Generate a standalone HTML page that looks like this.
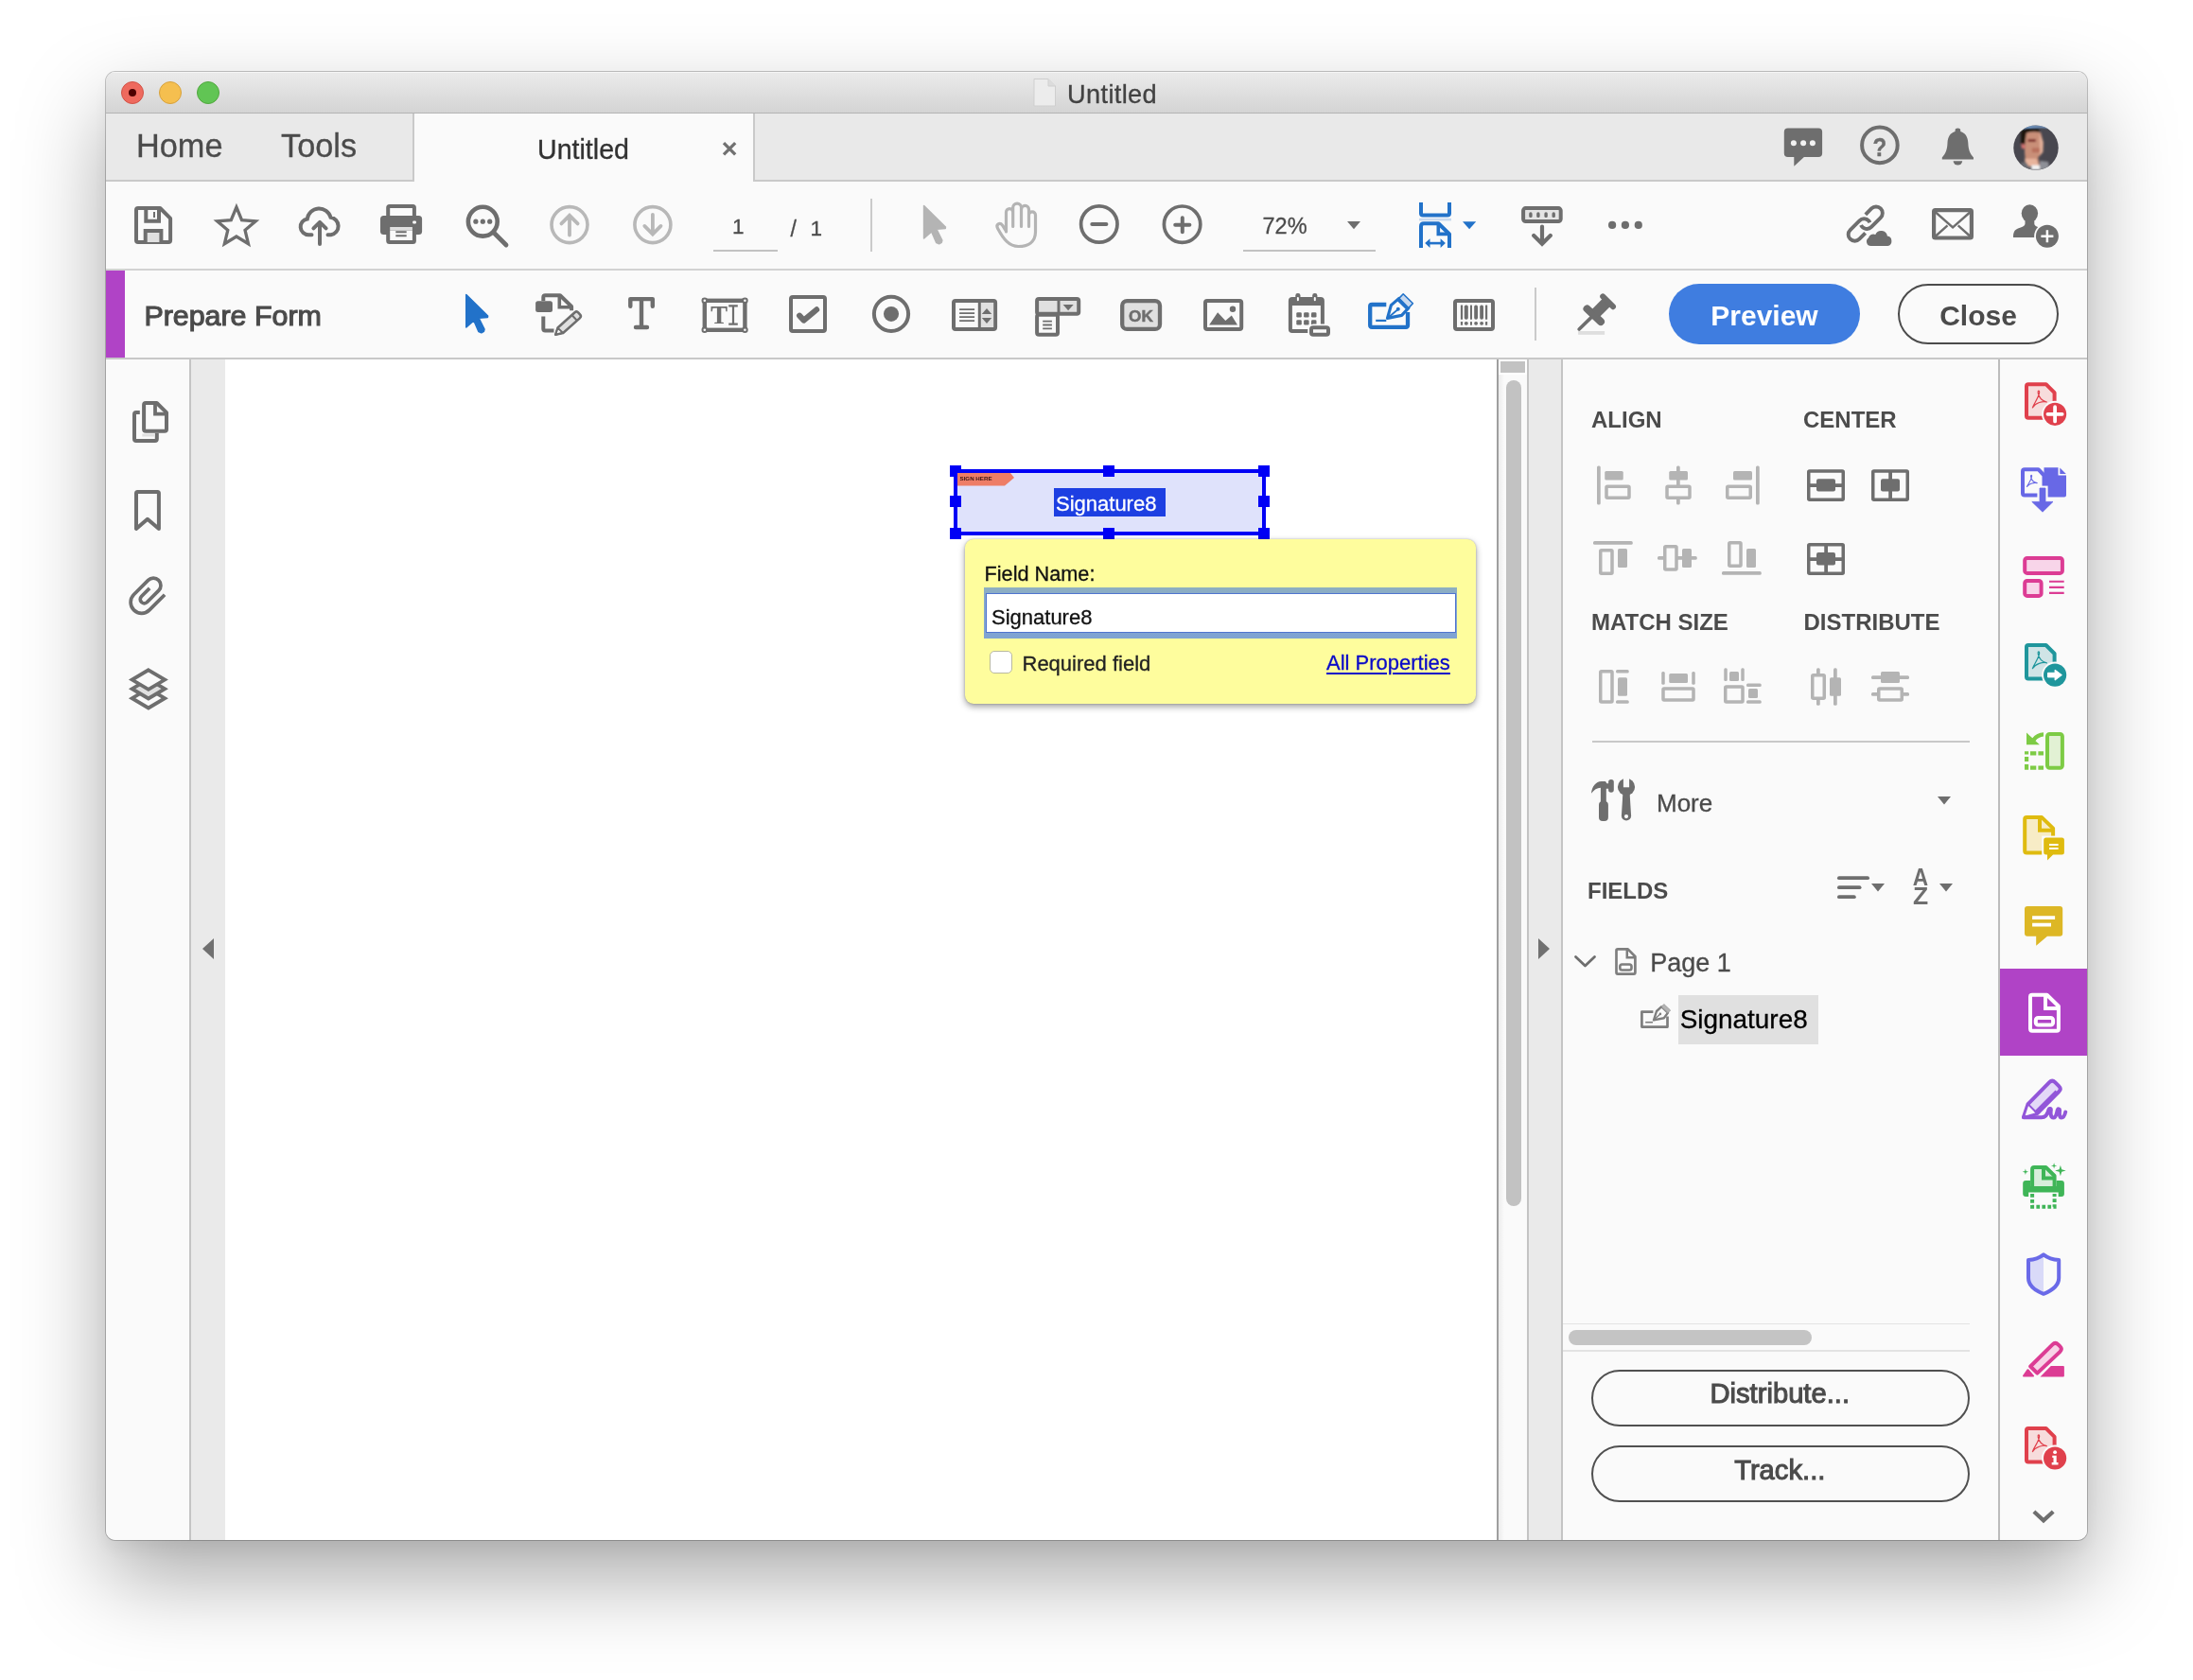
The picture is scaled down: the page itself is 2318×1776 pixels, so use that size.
<!DOCTYPE html>
<html lang="en">
<head>
<meta charset="utf-8">
<title>Untitled</title>
<style>
*{box-sizing:border-box;margin:0;padding:0}
html,body{width:2318px;height:1776px;overflow:hidden;background:#fff}
body{font-family:"Liberation Sans",sans-serif;color:#4b4b4b;position:relative}
.abs{position:absolute}
svg{position:absolute;overflow:visible}
#win{position:absolute;left:112px;top:76px;width:2094px;height:1552px;border-radius:10px;background:#fafafa;
 box-shadow:0 0 0 1px rgba(0,0,0,.22),0 40px 92px rgba(0,0,0,.34),0 10px 16px rgba(0,0,0,.04);}
#clip{position:absolute;left:0;top:0;width:2094px;height:1552px;border-radius:10px;overflow:hidden;will-change:transform}
#titlebar{left:0;top:0;width:2094px;height:44px;background:linear-gradient(#ebebeb,#d4d4d4);border-bottom:1px solid #b4b4b4;box-shadow:inset 0 1px 0 #f6f6f6}
.tl{position:absolute;top:10px;width:24px;height:24px;border-radius:50%}
#tabbar{left:0;top:44px;width:2094px;height:72px;background:#e9e9e9;border-bottom:2px solid #c9c9c9}
#tab{left:324px;top:44px;width:362px;height:72px;background:#fafafa;border-left:2px solid #c9c9c9;border-right:2px solid #c9c9c9}
#tb1{left:0;top:116px;width:2094px;height:94px;background:#fafafa;border-bottom:2px solid #d2d2d2}
#tb2{left:0;top:210px;width:2094px;height:94px;background:#fafafa;border-bottom:2px solid #c8c8c8}
.t{position:absolute;white-space:nowrap;line-height:1;-webkit-text-stroke:.3px}
.t[style*="font-weight:bold"]{-webkit-text-stroke:0}
</style>
</head>
<body>
<div id="win"><div id="clip">
<!-- coordinates inside #clip are window-relative: page x-112, page y-76 -->
<div id="titlebar" class="abs"></div>
<div class="tl" style="left:16px;background:#ee6a5e;border:1px solid #d15347"></div>
<div class="tl" style="left:56px;background:#f5bf4f;border:1px solid #d6a13d"></div>
<div class="tl" style="left:96px;background:#61c554;border:1px solid #51a73e"></div>
<div class="abs" style="left:24px;top:18px;width:8px;height:8px;border-radius:50%;background:#4d0000"></div>
<div class="t" style="left:1016px;top:9.6px;font-size:27.2px;letter-spacing:.36px;color:#424242">Untitled</div>

<div id="tabbar" class="abs"></div>
<div id="tab" class="abs"></div>
<div class="t" style="left:32px;top:61.4px;font-size:34.3px;color:#4b4b4b">Home</div>
<div class="t" style="left:185px;top:61.4px;font-size:34.3px;color:#4b4b4b">Tools</div>
<div class="t" style="left:456px;top:68.2px;font-size:28.6px;color:#323232">Untitled</div>

<div id="tb1" class="abs"></div>
<div id="tb2" class="abs"></div>
<div class="abs" style="left:0;top:210px;width:20px;height:92px;background:#b043c6"></div>
<div class="t" style="left:40.4px;top:242.47px;font-size:30.4px;color:#4b4b4b;-webkit-text-stroke:1.15px #4b4b4b">Prepare Form</div>


<!-- left sidebar -->
<div class="abs" style="left:0;top:304px;width:88px;height:1248px;background:#fafafa"></div>
<div class="abs" style="left:88px;top:304px;width:2px;height:1248px;background:#c4c4c4"></div>
<div class="abs" style="left:90px;top:304px;width:36px;height:1248px;background:#eaeaea"></div>
<svg style="left:101px;top:916px" width="14" height="22" viewBox="0 0 14 22"><path d="M13 0V22L1 11Z" fill="#707070"/></svg>
<!-- document -->
<div class="abs" style="left:126px;top:304px;width:1344px;height:1248px;background:#fff"></div>
<!-- scrollbar -->
<div class="abs" style="left:1470px;top:304px;width:34px;height:1248px;background:linear-gradient(90deg,#9f9f9f 0,#9f9f9f 1.5px,#ececec 2px,#fafafa 8px,#fafafa 32px,#c4c4c4 32px)"></div>
<div class="abs" style="left:1472px;top:304px;width:30px;height:16px;background:#fff"></div><div class="abs" style="left:1474px;top:306px;width:26px;height:12px;background:#c2c2c2"></div>
<div class="abs" style="left:1480px;top:326px;width:16px;height:873px;border-radius:8px;background:#c2c2c2"></div>
<div class="abs" style="left:1504px;top:304px;width:34px;height:1248px;background:#eaeaea"></div>
<div class="abs" style="left:1538px;top:304px;width:2px;height:1248px;background:#c4c4c4"></div>
<svg style="left:1514px;top:916px" width="14" height="22" viewBox="0 0 14 22"><path d="M0 0V22L12 11Z" fill="#707070"/></svg>
<!-- right panel -->
<div id="rp" class="abs" style="left:1540px;top:304px;width:461px;height:1248px;background:#fafafa"></div>
<div class="abs" style="left:2000.4px;top:304px;width:1.6px;height:1248px;background:#bcbcbc"></div>
<!-- right strip -->
<div class="abs" style="left:2002px;top:304px;width:92px;height:1248px;background:#fafafa"></div>
<div class="abs" style="left:2001.8px;top:947.8px;width:92.2px;height:91.8px;background:#b043c6"></div>
<div class="abs" style="left:896px;top:420px;width:330px;height:70px;border:4px solid #0000f5;background:#dfe2fb"></div>
<div class="abs" style="left:892px;top:416px;width:12px;height:12px;background:#0000f5"></div>
<div class="abs" style="left:892px;top:448px;width:12px;height:12px;background:#0000f5"></div>
<div class="abs" style="left:892px;top:482px;width:12px;height:12px;background:#0000f5"></div>
<div class="abs" style="left:1054px;top:416px;width:12px;height:12px;background:#0000f5"></div>
<div class="abs" style="left:1054px;top:482px;width:12px;height:12px;background:#0000f5"></div>
<div class="abs" style="left:1218px;top:416px;width:12px;height:12px;background:#0000f5"></div>
<div class="abs" style="left:1218px;top:448px;width:12px;height:12px;background:#0000f5"></div>
<div class="abs" style="left:1218px;top:482px;width:12px;height:12px;background:#0000f5"></div>
<svg style="left:900px;top:424px" width="62" height="14" viewBox="0 0 62 14"><path d="M0 0H56L60 5L50 13.6H0Z" fill="#ee7d66"/><text x="2.5" y="8" font-family="Liberation Sans,sans-serif" font-weight="bold" font-size="6.2" fill="#3a1410">SIGN HERE</text></svg>
<div class="t" style="left:1002px;top:440px;width:118px;height:30px;background:#1d3fe2;color:#fff;font-size:22px;padding:5.5px 0 0 2px">Signature8</div>
<div class="abs" style="left:908px;top:494px;width:540px;height:174px;border-radius:9px;background:#fefd9d;box-shadow:0 3px 7px rgba(0,0,0,.38),0 0 2px rgba(0,0,0,.25)"></div>
<div class="t" style="left:928.5px;top:520px;font-size:21.7px;color:#111;-webkit-text-stroke:.3px #111">Field Name:</div>
<div class="abs" style="left:928px;top:545px;width:500px;height:54px;background:linear-gradient(#8fb0bf,#86a8cc 20%,#7fa3d3)"></div>
<div class="abs" style="left:929.5px;top:551px;width:497px;height:42px;background:#fff;border:1.5px solid #4f74cf"></div>
<div class="t" style="left:936px;top:566px;font-size:22px;color:#111;-webkit-text-stroke:.3px #111">Signature8</div>
<div class="abs" style="left:934px;top:611.5px;width:24px;height:24px;border-radius:5px;background:#fff;border:1.5px solid #b9b9a0"></div>
<div class="t" style="left:968.5px;top:614.5px;font-size:22px;color:#222;-webkit-text-stroke:.3px #222">Required field</div>
<div class="t" style="left:1290px;top:614px;font-size:22px;color:#0a0ac8;text-decoration:underline;text-decoration-thickness:2.4px;-webkit-text-stroke:.3px #0a0ac8;text-underline-offset:3px">All Properties</div>

<!--PANEL-->
<div class="t" style="left:1570.00px;top:355.68px;font-size:24px;font-weight:bold;color:#4b4b4b;">ALIGN</div>
<div class="t" style="left:1794.00px;top:355.68px;font-size:24px;font-weight:bold;color:#4b4b4b;">CENTER</div>
<div class="t" style="left:1570.00px;top:570.18px;font-size:24px;font-weight:bold;color:#4b4b4b;">MATCH SIZE</div>
<div class="t" style="left:1794.50px;top:570.18px;font-size:24px;font-weight:bold;color:#4b4b4b;">DISTRIBUTE</div>
<div class="abs" style="left:1570.50px;top:706.50px;width:399.50px;height:2.00px;background:#c8c8c8"></div>
<div class="t" style="left:1639.00px;top:760.24px;font-size:26px;font-weight:normal;color:#4b4b4b;">More</div>
<div class="t" style="left:1566.00px;top:853.68px;font-size:24px;font-weight:bold;color:#4b4b4b;">FIELDS</div>
<div class="t" style="left:1632.25px;top:929.39px;font-size:27px;font-weight:normal;color:#4b4b4b;">Page 1</div>
<div class="abs" style="left:1662.00px;top:976.00px;width:148.00px;height:52.00px;background:#e0e0e0"></div>
<div class="t" style="left:1663.75px;top:988.13px;font-size:27.9px;font-weight:normal;color:#000;">Signature8</div>
<div class="abs" style="left:1540.00px;top:1322.50px;width:430.00px;height:1.50px;background:#e3e3e3"></div>
<div class="abs" style="left:1540.00px;top:1351.00px;width:430.00px;height:1.50px;background:#e3e3e3"></div>
<div class="abs" style="left:1546.00px;top:1330.00px;width:257.00px;height:16.00px;background:#c4c4c4;border-radius:8px"></div>
<div class="abs" style="left:1569.50px;top:1372.00px;width:400.50px;height:59.50px;border:2px solid #505050;border-radius:30px"></div>
<div class="abs" style="left:1569.50px;top:1452.00px;width:400.50px;height:59.50px;border:2px solid #505050;border-radius:30px"></div>
<div class="t" style="left:1569.25px;width:400px;text-align:center;top:1383.28px;font-size:29.2px;font-weight:normal;color:#4b4b4b;-webkit-text-stroke:1.05px #4b4b4b">Distribute...</div>
<div class="t" style="left:1569.25px;width:400px;text-align:center;top:1463.58px;font-size:29.2px;font-weight:normal;color:#4b4b4b;-webkit-text-stroke:1.05px #4b4b4b">Track...</div>
<svg style="left:-112px;top:-76px" width="2318" height="1776" viewBox="0 0 2318 1776"><rect x="1688" y="492.5" width="3.75" height="41.00" fill="#b4b4b4" rx="1.5"/>
<rect x="1696.25" y="498" width="19.50" height="9.50" fill="#b4b4b4" rx="1.5"/>
<rect x="1698.0" y="514.25" width="24.00" height="12.00" fill="#fafafa" stroke="#b4b4b4" stroke-width="3.5" rx="1"/>
<rect x="1772" y="492.5" width="3.75" height="41.00" fill="#b4b4b4" rx="1.5"/>
<rect x="1764.25" y="498" width="19.75" height="9.50" fill="#b4b4b4" rx="1.5"/>
<rect x="1762.0" y="514.25" width="24.00" height="12.00" fill="#fafafa" stroke="#b4b4b4" stroke-width="3.5" rx="1"/>
<rect x="1856" y="492.5" width="3.75" height="41.00" fill="#b4b4b4" rx="1.5"/>
<rect x="1832" y="498" width="20.00" height="9.50" fill="#b4b4b4" rx="1.5"/>
<rect x="1825.75" y="514.25" width="24.50" height="12.00" fill="#fafafa" stroke="#b4b4b4" stroke-width="3.5" rx="1"/>
<rect x="1911.75" y="498.0" width="36.50" height="30.25" fill="none" stroke="#6e6e6e" stroke-width="3.5" rx="1"/>
<rect x="1912" y="511.25" width="36.00" height="3.75" fill="#6e6e6e" rx="0"/>
<rect x="1920" y="506.25" width="20.00" height="13.25" fill="#6e6e6e" rx="2"/>
<rect x="1979.75" y="498.0" width="36.50" height="30.25" fill="none" stroke="#6e6e6e" stroke-width="3.5" rx="1"/>
<rect x="1996.25" y="498" width="3.75" height="30.00" fill="#6e6e6e" rx="0"/>
<rect x="1988" y="506.25" width="20.00" height="13.25" fill="#6e6e6e" rx="2"/>
<rect x="1684" y="572" width="41.75" height="3.75" fill="#b4b4b4" rx="1.5"/>
<rect x="1691.75" y="581.75" width="12.25" height="24.50" fill="#fafafa" stroke="#b4b4b4" stroke-width="3.5" rx="1"/>
<rect x="1710" y="580" width="10.00" height="20.00" fill="#b4b4b4" rx="1.5"/>
<rect x="1752" y="588" width="41.75" height="3.75" fill="#b4b4b4" rx="1.5"/>
<rect x="1759.75" y="577.75" width="12.25" height="24.25" fill="#fafafa" stroke="#b4b4b4" stroke-width="3.5" rx="1"/>
<rect x="1778" y="580" width="10.00" height="20.00" fill="#b4b4b4" rx="1.5"/>
<rect x="1820" y="604" width="41.75" height="3.75" fill="#b4b4b4" rx="1.5"/>
<rect x="1827.75" y="573.75" width="12.25" height="24.50" fill="#fafafa" stroke="#b4b4b4" stroke-width="3.5" rx="1"/>
<rect x="1846" y="580" width="10.00" height="20.00" fill="#b4b4b4" rx="1.5"/>
<rect x="1911.75" y="575.75" width="36.50" height="30.50" fill="none" stroke="#6e6e6e" stroke-width="3.5" rx="1"/>
<rect x="1912" y="589.25" width="36.00" height="3.75" fill="#6e6e6e" rx="0"/>
<rect x="1928.25" y="576" width="3.75" height="30.00" fill="#6e6e6e" rx="0"/>
<rect x="1920" y="584" width="20.00" height="13.50" fill="#6e6e6e" rx="2"/>
<rect x="1691.75" y="709.75" width="12.25" height="32.25" fill="#fafafa" stroke="#b4b4b4" stroke-width="3.5" rx="1"/>
<rect x="1710" y="716.25" width="10.00" height="19.50" fill="#b4b4b4" rx="1.5"/>
<rect x="1708" y="708" width="13.75" height="3.50" fill="#b4b4b4" rx="1.5"/>
<rect x="1708" y="740.25" width="13.75" height="3.50" fill="#b4b4b4" rx="1.5"/>
<rect x="1764.25" y="712" width="19.75" height="10.00" fill="#b4b4b4" rx="1.5"/>
<rect x="1758.0" y="728.0" width="32.00" height="12.00" fill="#fafafa" stroke="#b4b4b4" stroke-width="3.5" rx="1"/>
<rect x="1756.25" y="710" width="3.50" height="13.75" fill="#b4b4b4" rx="1.5"/>
<rect x="1788.25" y="710" width="3.50" height="13.75" fill="#b4b4b4" rx="1.5"/>
<rect x="1822.25" y="706.25" width="3.50" height="13.75" fill="#b4b4b4" rx="1.5"/>
<rect x="1840.25" y="706.25" width="3.50" height="13.75" fill="#b4b4b4" rx="1.5"/>
<rect x="1828" y="710" width="10.00" height="10.00" fill="#b4b4b4" rx="1.5"/>
<rect x="1823.75" y="726.0" width="18.25" height="16.00" fill="#fafafa" stroke="#b4b4b4" stroke-width="3.5" rx="1"/>
<rect x="1846" y="722.5" width="15.75" height="3.50" fill="#b4b4b4" rx="1.5"/>
<rect x="1848" y="728" width="10.00" height="10.00" fill="#b4b4b4" rx="1.5"/>
<rect x="1846" y="740.25" width="15.75" height="3.50" fill="#b4b4b4" rx="1.5"/>
<rect x="1920" y="706.25" width="3.75" height="39.50" fill="#b4b4b4" rx="1.5"/>
<rect x="1938" y="706.25" width="3.75" height="39.50" fill="#b4b4b4" rx="1.5"/>
<rect x="1915.75" y="713.75" width="12.50" height="24.50" fill="#fafafa" stroke="#b4b4b4" stroke-width="3.5" rx="1"/>
<rect x="1934" y="716.25" width="12.00" height="19.50" fill="#b4b4b4" rx="1.5"/>
<rect x="1978" y="714.25" width="40.00" height="3.75" fill="#b4b4b4" rx="1.5"/>
<rect x="1978" y="732" width="40.00" height="3.75" fill="#b4b4b4" rx="1.5"/>
<rect x="1988" y="710" width="20.00" height="12.00" fill="#b4b4b4" rx="1.5"/>
<rect x="1985.75" y="728.0" width="24.50" height="12.00" fill="#fafafa" stroke="#b4b4b4" stroke-width="3.5" rx="1"/>
<path d="M2048 842H2062L2055 850.5Z" fill="#6e6e6e"/>
<rect x="1942" y="926.25" width="34.00" height="3.75" fill="#6e6e6e" rx="2"/>
<rect x="1942" y="936.25" width="25.50" height="3.75" fill="#6e6e6e" rx="2"/>
<rect x="1942" y="946.25" width="19.75" height="3.75" fill="#6e6e6e" rx="2"/>
<path d="M1978 934H1992L1985 942.5Z" fill="#6e6e6e"/>
<path d="M2050 934H2064L2057 942.5Z" fill="#6e6e6e"/>
<text transform="translate(2030 935.8) scale(.9 1)" text-anchor="middle" font-family="Liberation Sans,sans-serif" font-weight="bold" font-size="25.2" fill="#6e6e6e">A</text>
<text transform="translate(2030 956) scale(1.05 1)" text-anchor="middle" font-family="Liberation Sans,sans-serif" font-weight="bold" font-size="25.2" fill="#6e6e6e">Z</text>
<path d="M1665.5 1011.5L1675.5 1021L1685.5 1011.5" fill="none" stroke="#6e6e6e" stroke-width="2.8" stroke-linecap="round" stroke-linejoin="round"/>
<path d="M1682 838.8C1682.5 831.5 1687 826 1692.5 826L1696.5 826C1697.6 826 1697.8 828.2 1698.6 828.2L1701 828.2L1701 833.7L1697.8 833.7L1697.8 848L1691.9 848L1691.9 832.8C1688 832.8 1685 835 1682 838.8Z" fill="#6e6e6e"/>
<rect x="1700.1" y="824.1" width="5.70" height="13.70" fill="#6e6e6e" rx="2.8"/>
<rect x="1690" y="847" width="9.90" height="20.90" fill="#6e6e6e" rx="4"/>
<circle cx="1719" cy="831.9" r="9.1" fill="#6e6e6e"/>
<rect x="1715.9" y="821" width="6.20" height="11.30" fill="#fafafa" rx="0"/>
<path d="M1715.4 838L1722.6 838L1724.1 862.5A5.1 5.1 0 0 1 1713.9 862.5Z" fill="#6e6e6e"/><circle cx="1719" cy="863.1" r="2.1" fill="#fafafa"/>
<path d="M1710 1003.4H1720.7L1728.4 1011.2V1028.1Q1728.4 1029.6 1726.9 1029.6H1710Q1708.5 1029.6 1708.5 1028.1V1004.9Q1708.5 1003.4 1710 1003.4Z" fill="none" stroke="#7e7e7e" stroke-width="2.7" stroke-linejoin="round"/>
<path d="M1719.8 1003.6V1012.2H1728.2" fill="none" stroke="#7e7e7e" stroke-width="2.5"/>
<rect x="1712.3" y="1019.5" width="12.2" height="6" rx="2.2" fill="none" stroke="#7e7e7e" stroke-width="2.6"/>
<path d="M1747.4 1069.6H1735.4V1085.6H1762.5V1074.5" fill="none" stroke="#7e7e7e" stroke-width="2.7" stroke-linejoin="round"/>
<path d="M1739.2 1080.7H1747" stroke="#7e7e7e" stroke-width="1.6"/>
<path d="M1748 1078.4L1751 1069L1756.3 1064.2L1763 1070.6L1758.8 1076.2Z" fill="#fafafa" stroke="#7e7e7e" stroke-width="2.4" stroke-linejoin="round"/>
<path d="M1756.3 1064.2L1758.8 1061.6L1765.6 1068L1763 1070.6Z" fill="#b4b4b4" stroke="#a0a0a0" stroke-width="1"/>
<path d="M1748.2 1078.2L1754.6 1072.2" stroke="#7e7e7e" stroke-width="1.3"/><circle cx="1754.9" cy="1071.9" r="1.3" fill="#7e7e7e"/></svg>
<!--/PANEL-->
<!--LEFT-->
<svg style="left:-112px;top:-76px" width="2318" height="1776" viewBox="0 0 2318 1776"><path d="M147.8 436.1H144Q142 436.1 142 438.1V463.9Q142 465.9 144 465.9H163.8Q165.8 465.9 165.8 463.9V457.7" fill="none" stroke="#6e6e6e" stroke-width="4"/>
<rect x="150.3" y="458.5" width="13.4" height="3" fill="#e0e0e0"/>
<path d="M154.1 426H165.7L176 436.1V453.7Q176 455.7 174 455.7H154.1Q152.1 455.7 152.1 453.7V428Q152.1 426 154.1 426Z" fill="#fafafa" stroke="#6e6e6e" stroke-width="4" stroke-linejoin="round"/>
<path d="M164 426.3V437.7H176" fill="none" stroke="#6e6e6e" stroke-width="3.8"/>
<path d="M145.5 520H166.4Q167.9 520 167.9 521.5V559L155.9 548.8L144 559V521.5Q144 520 145.5 520Z" fill="none" stroke="#6e6e6e" stroke-width="4" stroke-linejoin="round"/>
<g transform="translate(155.5 629.2) rotate(-45)"><path d="M13.5 12.8L-9.4 12.8A11.6 11.6 0 0 1 -9.4 -10.4L12 -10.4A7.8 7.8 0 0 1 12 5.2L-5.2 5.2A4.25 4.25 0 0 1 -5.2 -3.3L7 -3.3" fill="none" stroke="#6e6e6e" stroke-width="3.7" stroke-linejoin="round"/></g>
<path d="M156.9 727.9000000000001L174.20000000000002 738.2L156.9 748.5L139.6 738.2Z" fill="#fafafa" stroke="#6e6e6e" stroke-width="3.8" stroke-linejoin="miter"/>
<path d="M156.9 717.9000000000001L174.20000000000002 728.2L156.9 738.5L139.6 728.2Z" fill="#e0e0e0" stroke="#6e6e6e" stroke-width="3.8" stroke-linejoin="miter"/>
<path d="M156.9 708.3000000000001L174.20000000000002 718.6L156.9 728.9L139.6 718.6Z" fill="#fafafa" stroke="#6e6e6e" stroke-width="3.8" stroke-linejoin="miter"/></svg>
<!--/LEFT-->
<!--STRIP-->
<svg style="left:-112px;top:-76px" width="2318" height="1776" viewBox="0 0 2318 1776"><path d="M2144 406.2H2162.6L2171.6 415.2V441.8H2144Q2142 441.8 2142 439.8V408.2Q2142 406.2 2144 406.2Z" fill="#f7dcdc" stroke="#e0404c" stroke-width="4" stroke-linejoin="round"/>
<path d="M2148.4 430.9C2149.9 426.4 2154.9 420.4 2155.6 414.9C2155.8 412.4 2153.8 412.4 2154.2000000000003 415.4C2154.9 420.4 2158.9 424.2 2163.4 425.0C2159.4 423.59999999999997 2151.4 425.9 2148.4 430.9Z" fill="none" stroke="#e0404c" stroke-width="1.2" stroke-linejoin="round"/>
<circle cx="2172.1" cy="437.8" r="14" fill="#fafafa"/><circle cx="2172.1" cy="437.8" r="12.1" fill="#e0404c"/>
<path d="M2164.5 437.8H2179.7M2172.1 430.2V445.40000000000003" stroke="#fff" stroke-width="3.8" stroke-linecap="round"/>
<path d="M2140 496.2H2154.5L2160.5 502.5V523.5H2140Q2138 523.5 2138 521.5V498.2Q2138 496.2 2140 496.2Z" fill="#fafafa" stroke="#6868e6" stroke-width="4" stroke-linejoin="round"/>
<path d="M2160.5 494.2H2175.5V502.6H2184V523.5Q2184 525.5 2182 525.5H2160.5Z" fill="#6868e6"/><path d="M2177.3 494.5L2183.8 500.9H2177.3Z" fill="#6868e6"/>
<path d="M2142.5 514.5C2144 511.5 2147 507.5 2147.6 503.5C2147.8 501.7 2146.4 501.7 2146.6 503.8C2147.2 507.5 2150 510 2153.2 510.6C2150 509.8 2145 511 2142.5 514.5Z" fill="none" stroke="#6868e6" stroke-width="1.1" stroke-linejoin="round"/>
<path d="M2153.4 513.6H2164.6V527.5H2153.4Z" fill="#fafafa"/>
<path d="M2156 516H2162V530.4H2170L2159 541.2L2147.8 530.4H2156Z" fill="#6868e6" stroke="#6868e6" stroke-width=".8" stroke-linejoin="round"/>
<rect x="2140.2" y="590" width="39.7" height="15.9" rx="2.5" fill="#f8d5e9" stroke="#dc3c94" stroke-width="4"/>
<rect x="2140.2" y="614" width="17.4" height="15.9" rx="2.5" fill="#f8d5e9" stroke="#dc3c94" stroke-width="4"/>
<path d="M2166 614.8H2181.7M2166 620.9H2181.7M2166 626.9H2181.7" stroke="#dc3c94" stroke-width="2.1"/>
<path d="M2144 682H2162.6L2171.6 691V717.6H2144Q2142 717.6 2142 715.6V684Q2142 682 2144 682Z" fill="#cfe4e6" stroke="#1f969c" stroke-width="4" stroke-linejoin="round"/>
<path d="M2148.4 706.7C2149.9 702.2 2154.9 696.2 2155.6 690.7C2155.8 688.2 2153.8 688.2 2154.2000000000003 691.2C2154.9 696.2 2158.9 700.0 2163.4 700.8000000000001C2159.4 699.4000000000001 2151.4 701.7 2148.4 706.7Z" fill="none" stroke="#1f969c" stroke-width="1.2" stroke-linejoin="round"/>
<circle cx="2172.1" cy="713.6" r="14" fill="#fafafa"/><circle cx="2172.1" cy="713.6" r="12.1" fill="#1f969c"/>
<path d="M2164.5 711.3000000000001H2172.1V708.1L2179.4 713.6L2172.1 719.1V715.9H2164.5Z" fill="#fff" stroke="#fff" stroke-width="1" stroke-linejoin="round"/>
<rect x="2164" y="776" width="15.9" height="35.8" rx="2.5" fill="#e2f1d4" stroke="#7dcb45" stroke-width="4"/>
<path d="M2140 794.2H2144.2V797H2140ZM2146 794.2H2152.3V798.4H2146ZM2154.4 794.2H2160V798.4H2154.4ZM2140 800H2144.2V805H2140ZM2140 808H2144.2V813.8H2140ZM2146 809.6H2152.3V813.8H2146ZM2154.4 809.6H2160V813.8H2154.4ZM2140 794.2H2144.2V797.5H2140Z" fill="#7dcb45"/>
<path d="M2142 774.6V787.3H2155.9L2151.5 783.2C2153.5 780.3 2156.5 778.6 2160 778.4V774.2C2155.3 774.4 2151 776.6 2148.3 780.3Z" fill="#7dcb45"/>
<path d="M2142.2 864.1H2158.2L2170.1 875.6V901.6H2142.2Q2140.2 901.6 2140.2 899.6V866.1Q2140.2 864.1 2142.2 864.1Z" fill="#f7ecc6" stroke="#dfbb0f" stroke-width="4" stroke-linejoin="round"/>
<path d="M2156 864.5V877.8H2170" fill="none" stroke="#dfbb0f" stroke-width="4"/>
<path d="M2158.2 883.6H2184V911H2158.2Z" fill="#fafafa"/>
<path d="M2162.7 885.6H2179.4Q2181.9 885.6 2181.9 888.1V901.1Q2181.9 903.6 2179.4 903.6H2170.1L2164 909.4V903.6H2162.7Q2160.2 903.6 2160.2 901.1V888.1Q2160.2 885.6 2162.7 885.6Z" fill="#dfbb0f"/>
<path d="M2166 893H2175.6M2166 897H2175.6" stroke="#fff" stroke-width="2"/>
<path d="M2143 958H2177.2Q2180.2 958 2180.2 961V986.8Q2180.2 989.8 2177.2 989.8H2164L2152.2 999.8V989.8H2143Q2140 989.8 2140 986.8V961Q2140 958 2143 958Z" fill="#ddb725"/>
<path d="M2148.1 970.1H2172.1M2148.1 977.7H2168" stroke="#fff" stroke-width="3.7"/>
<path d="M2148 1051.7H2163.6L2175.9 1063.8V1087.7Q2175.9 1089.7 2173.9 1089.7H2148Q2146 1089.7 2146 1087.7V1053.7Q2146 1051.7 2148 1051.7Z" fill="none" stroke="#fff" stroke-width="4" stroke-linejoin="round"/>
<path d="M2162 1052V1065.9H2176" fill="none" stroke="#fff" stroke-width="4"/>
<rect x="2151.8" y="1076" width="18.3" height="7.6" rx="2.6" fill="none" stroke="#fff" stroke-width="4"/>
<path d="M2139 1181L2143.6 1167.2L2166.2 1144.2Q2169.2 1141.2 2172.2 1144.2L2176.2 1148.2Q2179.2 1151.2 2176.2 1154.2L2153.4 1177Z" fill="#e3d8f7" stroke="#9256d9" stroke-width="4" stroke-linejoin="round"/>
<path d="M2143.6 1167.2L2153.4 1177L2139 1181Z" fill="#fafafa" stroke="#9256d9" stroke-width="2" stroke-linejoin="round"/>
<path d="M2151.5 1176.5L2174 1153.8" stroke="#9256d9" stroke-width="4"/>
<path d="M2139 1181.3H2158C2162.5 1181.3 2164.5 1177 2165.5 1173C2166 1171.5 2168 1171.5 2167.8 1173.5C2167.5 1176 2167 1181.5 2170.5 1181.5C2173.5 1181.5 2174 1176 2174.8 1173.3C2175.3 1171.8 2177.3 1172 2177 1174C2176.8 1176.5 2176.5 1181.5 2179 1181.5C2181 1181.5 2182.5 1178.5 2183.2 1175.6" fill="none" stroke="#9256d9" stroke-width="4" stroke-linecap="round" stroke-linejoin="round"/>
<path d="M2150.1 1234H2162.4L2171.6 1243V1256H2148.1V1236Q2148.1 1234 2150.1 1234Z" fill="#d8eedb" stroke="#3fb557" stroke-width="4" stroke-linejoin="round"/>
<path d="M2160 1234.3V1245.4H2171.6" fill="none" stroke="#3fb557" stroke-width="4"/>
<path d="M2141.2 1247.9H2146.1V1254H2173.6V1247.9H2178.9Q2181.9 1247.9 2181.9 1250.9V1262.1Q2181.9 1265.1 2178.9 1265.1H2175.7V1260.5H2144.2V1265.1H2141.2Q2138.2 1265.1 2138.2 1262.1V1250.9Q2138.2 1247.9 2141.2 1247.9Z" fill="#3fb557"/>
<path d="M2148.1 1262V1275.7H2171.6V1262" fill="none" stroke="#3fb557" stroke-width="4" stroke-dasharray="3.7 2.3" stroke-dashoffset="0"/>
<path d="M2177.9 1231.7L2179.176 1236.224L2183.7000000000003 1237.5L2179.176 1238.776L2177.9 1243.3L2176.6240000000003 1238.776L2172.1 1237.5L2176.6240000000003 1236.224Z" fill="#3fb557"/>
<path d="M2171.1 1229.2L2171.804 1231.6960000000001L2174.2999999999997 1232.4L2171.804 1233.104L2171.1 1235.6000000000001L2170.3959999999997 1233.104L2167.9 1232.4L2170.3959999999997 1231.6960000000001Z" fill="#3fb557"/>
<path d="M2140.9 1235.6L2141.6040000000003 1238.096L2144.1 1238.8L2141.6040000000003 1239.504L2140.9 1242.0L2140.196 1239.504L2137.7000000000003 1238.8L2140.196 1238.096Z" fill="#3fb557"/>
<path d="M2160 1326.3C2155.5 1329.8 2150 1331.6 2144 1332V1351C2144 1359 2151.5 1364.5 2160 1367.8Z" fill="#d9daf8"/>
<path d="M2160 1326.3C2155.5 1329.8 2150 1331.6 2144 1332V1351C2144 1359 2151.5 1364.5 2160 1367.8C2168.5 1364.5 2176.2 1359 2176.2 1351V1332C2170 1331.6 2164.5 1329.8 2160 1326.3Z" fill="none" stroke="#6a6ae8" stroke-width="4" stroke-linejoin="round"/>
<path d="M2146.2 1444.5L2169.5 1421.3Q2172.5 1418.3 2175.5 1421.3L2177.3 1423.1Q2180.3 1426.1 2177.3 1429.1L2153.4 1451.6Z" fill="#f8d3e7" stroke="#dc3c94" stroke-width="4" stroke-linejoin="round"/>
<path d="M2139 1454.6L2143.5 1448.2L2149 1454.6Z" fill="#dc3c94" stroke="#dc3c94" stroke-width="2" stroke-linejoin="round"/>
<path d="M2156.5 1455.6L2167.8 1444H2180.9Q2181.9 1444 2181.9 1445V1454.6Q2181.9 1455.6 2180.9 1455.6Z" fill="#dc3c94"/>
<path d="M2144 1509.9H2162.6L2171.6 1518.9V1545.5H2144Q2142 1545.5 2142 1543.5V1511.9Q2142 1509.9 2144 1509.9Z" fill="#f7dcdc" stroke="#e0404c" stroke-width="4" stroke-linejoin="round"/>
<path d="M2148.4 1534.6000000000001C2149.9 1530.1000000000001 2154.9 1524.1000000000001 2155.6 1518.6000000000001C2155.8 1516.1000000000001 2153.8 1516.1000000000001 2154.2000000000003 1519.1000000000001C2154.9 1524.1000000000001 2158.9 1527.9 2163.4 1528.7C2159.4 1527.3000000000002 2151.4 1529.6000000000001 2148.4 1534.6000000000001Z" fill="none" stroke="#e0404c" stroke-width="1.2" stroke-linejoin="round"/>
<circle cx="2172.1" cy="1541.5" r="14" fill="#fafafa"/><circle cx="2172.1" cy="1541.5" r="12.1" fill="#e0404c"/>
<circle cx="2172.1" cy="1535.2" r="1.9" fill="#fff"/><path d="M2169.2999999999997 1538.8H2173.7V1546.1H2175.5V1548.4H2168.7V1546.1H2170.5V1541.1H2169.2999999999997Z" fill="#fff"/>
<path d="M2149.9 1598L2160 1607.4L2170.2 1598" fill="none" stroke="#6e6e6e" stroke-width="4.2" stroke-linejoin="miter"/></svg>
<!--/STRIP-->
<!--TB1-->
<div class="t" style="left:662.00px;top:152.85px;font-size:22.5px;font-weight:normal;color:#4b4b4b;">1</div>
<div class="abs" style="left:642.00px;top:188.00px;width:68.00px;height:2.00px;background:#c2c2c2"></div>
<div class="t" style="left:723.50px;top:154.83px;font-size:23px;font-weight:normal;color:#4b4b4b;">/</div>
<div class="t" style="left:744.50px;top:154.95px;font-size:22.5px;font-weight:normal;color:#4b4b4b;">1</div>
<div class="abs" style="left:808.00px;top:134.00px;width:2.00px;height:56.00px;background:#cacaca"></div>
<div class="t" style="left:1222.50px;top:152.01px;font-size:23.5px;font-weight:normal;color:#4b4b4b;">72%</div>
<div class="abs" style="left:1202.00px;top:187.60px;width:140.00px;height:2.20px;background:#c2c2c2"></div>
<svg style="left:-112px;top:-76px" width="2318" height="1776" viewBox="0 0 2318 1776"><path d="M1093 83.5H1108L1115.5 91V112H1093Z" fill="#ececec" stroke="#cfcfcf" stroke-width="1"/><path d="M1108 83.5V91H1115.5" fill="#dcdcdc" stroke="#d0d0d0" stroke-width="1"/>
<path d="M765 151.2L777.2 163.4M777.2 151.2L765 163.4" stroke="#717171" stroke-width="3.3"/>
<path d="M1889.8 135.5H1922.1Q1926.1 135.5 1926.1 139.5V161.9Q1926.1 165.9 1922.1 165.9H1906.9L1896.3 175.7V165.9H1889.8Q1885.8 165.9 1885.8 161.9V139.5Q1885.8 135.5 1889.8 135.5Z" fill="#6e6e6e"/>
<circle cx="1895.9" cy="151.2" r="3" fill="#f2f2f2"/>
<circle cx="1906.1" cy="151.2" r="3" fill="#f2f2f2"/>
<circle cx="1915.9" cy="151.2" r="3" fill="#f2f2f2"/>
<circle cx="1986.9" cy="153.4" r="18.8" fill="none" stroke="#6e6e6e" stroke-width="4"/>
<text transform="translate(1986.9 165) scale(.86 1)" x="0" y="0" text-anchor="middle" font-family="Liberation Sans,sans-serif" font-weight="bold" font-size="28" fill="#6e6e6e" stroke="#6e6e6e" stroke-width=".4">?</text>
<path d="M2066.6 139V137.5Q2066.6 135.5 2069.4 135.5Q2072.2 135.5 2072.2 137.5V139C2077.5 140.5 2080 145 2080.3 151C2080.6 158 2082 162 2086 166.5V168.4H2052.8V166.5C2056.8 162 2058.2 158 2058.5 151C2058.8 145 2061.3 140.5 2066.6 139Z" fill="#6e6e6e"/>
<path d="M2064.6 170.2H2074.2A4.8 4.2 0 0 1 2064.6 170.2Z" fill="#6e6e6e"/>
<defs><clipPath id="av"><circle cx="2152" cy="156.2" r="23.7"/></clipPath><filter id="avb" x="-20%" y="-20%" width="140%" height="140%"><feGaussianBlur stdDeviation="0.9"/></filter></defs>
<g clip-path="url(#av)"><rect x="2126" y="130" width="52" height="52" fill="#48474f"/><g filter="url(#avb)"><path d="M2138.57 132.68H2165.0V135.18Q2152.14 133.57 2138.57 135.71Z" fill="#86bcf8"/><path d="M2136.07 152.14V140.0Q2136.79 135.36 2145.0 135.18H2154.29Q2156.07 136.79 2155.71 140.0H2142.86V152.14Z" fill="#1f170f"/><path d="M2141.79 140.71Q2148.57 138.21 2157.14 140.0L2159.64 150.0L2159.29 160.71Q2155.71 165.36 2154.29 166.07L2155.71 175.71H2141.43L2140.0 160.71L2140.36 152.14Z" fill="#c98f78"/><path d="M2155.71 141.07L2159.64 150.0L2159.29 160.71L2156.07 164.29Z" fill="#e2b09a"/><path d="M2136.07 152.5H2140.36V157.14H2137.14Z" fill="#d4706e"/><path d="M2143.57 147.14H2151.79V150.0H2143.57Z" fill="#7c2c2c"/><path d="M2147.86 156.43H2156.07V161.07H2147.86Z" fill="#b8705c"/><path d="M2140.0 167.86H2152.14L2155.71 175.71H2141.43Z" fill="#e8b49c"/><path d="M2147.14 174.64H2156.07V179.64H2147.14Z" fill="#f4f4f4"/><path d="M2156.07 170.0L2165.0 171.07L2166.43 179.64H2156.07Z" fill="#8e9097"/><path d="M2135.0 172.14L2141.43 171.43L2147.14 179.64H2137.86Z" fill="#6a6c72"/></g></g>
<path d="M146 220H169.2L180.1 230.9V253.9Q180.1 255.9 178.1 255.9H146Q144 255.9 144 253.9V222Q144 220 146 220Z" fill="none" stroke="#6e6e6e" stroke-width="4" stroke-linejoin="round"/>
<path d="M154.3 220V233.7H168V220" fill="none" stroke="#6e6e6e" stroke-width="4"/><path d="M163 224V230" stroke="#6e6e6e" stroke-width="2"/>
<path d="M153.7 256V244H170.4V256" fill="#e0e0e0" stroke="#6e6e6e" stroke-width="4"/>
<path d="M249.90 219.00L255.54 232.63L270.25 233.79L259.03 243.37L262.48 257.71L249.90 250.00L237.32 257.71L240.77 243.37L229.55 233.79L244.26 232.63Z" fill="none" stroke="#6e6e6e" stroke-width="3.3" stroke-linejoin="miter" stroke-miterlimit="10"/>
<path d="M329.5 248.2H326.2A8.4 8.4 0 0 1 324.8 231.5A12.6 12.6 0 0 1 349.5 229.8A9.3 9.3 0 0 1 349.8 248.2H346.5" fill="none" stroke="#6e6e6e" stroke-width="4" stroke-linecap="round"/>
<path d="M338 258V236M331.4 241.4L338 234.8L344.6 241.4" fill="none" stroke="#6e6e6e" stroke-width="4" stroke-linecap="round" stroke-linejoin="round"/>
<rect x="410.2" y="218" width="27.7" height="14" rx="1.5" fill="#fafafa" stroke="#6e6e6e" stroke-width="4"/>
<rect x="402" y="227.9" width="44.1" height="20" rx="3.5" fill="#6e6e6e"/><rect x="436.2" y="233.6" width="3.7" height="2.9" rx="1" fill="#fff"/>
<rect x="410.2" y="241.9" width="27.7" height="14" rx="1.5" fill="#fafafa" stroke="#6e6e6e" stroke-width="4"/><rect x="412.2" y="240" width="23.7" height="3.8" fill="#e0e0e0"/>
<path d="M418.3 245.2H429.7M418.3 249.2H429.7" stroke="#6e6e6e" stroke-width="2"/>
<circle cx="510.3" cy="234.2" r="15.4" fill="none" stroke="#6e6e6e" stroke-width="4.6"/><path d="M522 246L535 259" stroke="#6e6e6e" stroke-width="4.8" stroke-linecap="round"/>
<circle cx="502.9" cy="234.2" r="2.6" fill="#6e6e6e"/>
<circle cx="510.3" cy="234.2" r="2.6" fill="#6e6e6e"/>
<circle cx="517.7" cy="234.2" r="2.6" fill="#6e6e6e"/>
<circle cx="602" cy="237.6" r="19" fill="none" stroke="#b8b8b8" stroke-width="3.6"/><path d="M602 248.5V228.5M593.4 236.4L602 227.8L610.6 236.4" fill="none" stroke="#b8b8b8" stroke-width="3.8" stroke-linecap="round" stroke-linejoin="miter"/>
<circle cx="689.9" cy="237.6" r="19" fill="none" stroke="#b8b8b8" stroke-width="3.6"/><path d="M689.9 226.8V247M681.3 238.9L689.9 247.5L698.5 238.9" fill="none" stroke="#b8b8b8" stroke-width="3.8" stroke-linecap="round" stroke-linejoin="miter"/>
<path d="M976.6 217.6L976.6 252.0L984.6 244.8L989.8 256.6L992.6 257.8L995.2 256.2L995.8 254.0L989.8 242.2L999.2 241.4L999.4 240.0Z" fill="#b4b4b4" stroke="#b4b4b4" stroke-width="1.6" stroke-linejoin="round"/>
<path d="M1063.5 245V224.2a3.6 3.6 0 0 1 7.2 0V239.5M1070.7 226V219.6a4.4 4.4 0 0 1 8.8 0V239.5M1079.5 226V221.4a4 4 0 0 1 8 0V239.5M1087.5 231V227.4a3.5 3.5 0 0 1 7 0V245C1094.5 256 1086.5 260.5 1076.5 260.5C1066.5 260.5 1060.5 252.5 1054.6 241.5C1052.3 237.3 1056.8 234.6 1059.6 238.2L1063.5 244.5" fill="none" stroke="#b4b4b4" stroke-width="3.2" stroke-linecap="round" stroke-linejoin="round"/>
<circle cx="1161.8" cy="237" r="19.2" fill="none" stroke="#6e6e6e" stroke-width="3.7"/><path d="M1154.3 237H1169.4" stroke="#6e6e6e" stroke-width="4" stroke-linecap="round"/>
<circle cx="1249.6" cy="237.2" r="19.2" fill="none" stroke="#6e6e6e" stroke-width="3.7"/><path d="M1242.2 237.7H1257.4M1249.8 230.2V245.3" stroke="#6e6e6e" stroke-width="4" stroke-linecap="round"/>
<path d="M1424 234H1438L1431 242.3Z" fill="#6e6e6e"/>
<path d="M1502 214V225.6Q1502 227.6 1504 227.6H1530Q1532 227.6 1532 225.6V214" fill="none" stroke="#2272c9" stroke-width="4"/>
<rect x="1500" y="230.8" width="34" height="2.6" fill="#c9d9ee"/>
<path d="M1502 261.9V239.3Q1502 236.3 1505 236.3H1520.5L1532 247.5V261.9" fill="none" stroke="#2272c9" stroke-width="4" stroke-linejoin="round"/>
<path d="M1520.3 236.6V247.4H1531.8" fill="none" stroke="#2272c9" stroke-width="3.6"/>
<path d="M1510 257.1H1524" stroke="#2272c9" stroke-width="2.6"/><path d="M1506.2 257.1L1511.5 252.3V261.9ZM1527.9 257.1L1522.6 252.3V261.9Z" fill="#2272c9"/>
<path d="M1546 234.2H1560.2L1553.1 242.2Z" fill="#2272c9"/>
<rect x="1610.1" y="220.1" width="39.6" height="13.9" rx="2.5" fill="#e4e4e4" stroke="#6e6e6e" stroke-width="4"/>
<rect x="1616.2" y="224.3" width="3.4" height="5.7" rx="1.6" fill="#6e6e6e"/>
<rect x="1624.2" y="224.3" width="3.4" height="5.7" rx="1.6" fill="#6e6e6e"/>
<rect x="1632.3999999999999" y="224.3" width="3.4" height="5.7" rx="1.6" fill="#6e6e6e"/>
<rect x="1640.5" y="224.3" width="3.4" height="5.7" rx="1.6" fill="#6e6e6e"/>
<path d="M1630 239.5V257M1621.2 249L1630 257.8L1638.8 249" fill="none" stroke="#6e6e6e" stroke-width="4.2" stroke-linecap="round" stroke-linejoin="miter"/>
<circle cx="1704.1" cy="237.9" r="4.1" fill="#6e6e6e"/>
<circle cx="1717.9" cy="237.9" r="4.1" fill="#6e6e6e"/>
<circle cx="1731.8" cy="237.9" r="4.1" fill="#6e6e6e"/>
<g transform="translate(1978.1 230.2) rotate(-45)"><path d="M-2 -6.85L6.9 -6.85A6.85 6.85 0 0 1 6.9 6.85L-6.9 6.85A6.85 6.85 0 0 1 -13.34 -2.34" fill="none" stroke="#6e6e6e" stroke-width="3.9"/></g>
<g transform="translate(1965.4 243) rotate(-45)"><path d="M2 6.85L-6.9 6.85A6.85 6.85 0 0 1 -6.9 -6.85L6.9 -6.85A6.85 6.85 0 0 1 13.34 2.34" fill="none" stroke="#6e6e6e" stroke-width="3.9"/></g>
<path d="M1977.5 260A4.6 4.6 0 0 1 1975 251.6A5.2 5.2 0 0 1 1982.3 248A6.6 6.6 0 0 1 1994.9 249.6A5.3 5.3 0 0 1 1995.3 260Z" fill="#fafafa" stroke="#fafafa" stroke-width="4"/><path d="M1977.5 260A4.6 4.6 0 0 1 1975 251.6A5.2 5.2 0 0 1 1982.3 248A6.6 6.6 0 0 1 1994.9 249.6A5.3 5.3 0 0 1 1995.3 260Z" fill="#6e6e6e"/>
<rect x="2044.1" y="222.2" width="39.8" height="29.3" rx="1.5" fill="none" stroke="#6e6e6e" stroke-width="4.2"/>
<path d="M2045.5 224L2064.1 240.4L2082.7 224M2045.5 250L2058.5 238.4M2082.7 250L2069.7 238.4" fill="none" stroke="#6e6e6e" stroke-width="2.4"/>
<ellipse cx="2145.4" cy="225.6" rx="8.7" ry="9.4" fill="#6e6e6e"/>
<path d="M2140.5 232V236.5C2140.5 239 2137 240 2133 241.5C2129 243 2128 246 2128 250.9H2163V246C2163 243.5 2161 242.5 2157.5 241.3C2153.5 240 2150.3 239 2150.3 236.5V232Z" fill="#6e6e6e"/>
<circle cx="2163.9" cy="249.7" r="13.8" fill="#fafafa"/><circle cx="2163.9" cy="249.7" r="12" fill="#6e6e6e"/><path d="M2157.4 249.7H2170.4M2163.9 243.2V256.2" stroke="#fff" stroke-width="2.5"/></svg>
<!--/TB1-->
<!--TB2-->
<div class="abs" style="left:1509.8px;top:228px;width:2.2px;height:56px;background:#cacaca"></div>
<div class="abs" style="left:1652px;top:224px;width:202px;height:64px;border-radius:32px;background:#3f7de0"></div>
<div class="t" style="left:1652px;top:242.71px;width:202px;text-align:center;font-size:30px;font-weight:bold;color:#fff">Preview</div>
<div class="abs" style="left:1894px;top:224px;width:170px;height:64px;border-radius:32px;border:2px solid #4b4b4b"></div>
<div class="t" style="left:1894px;top:242.71px;width:170px;text-align:center;font-size:30px;font-weight:bold;color:#4b4b4b">Close</div>
<svg style="left:-112px;top:-76px" width="2318" height="1776" viewBox="0 0 2318 1776"><path d="M492.8 311.6L492.8 346.0L500.8 338.8L506.0 350.6L508.8 351.8L511.4 350.2L512.0 348.0L506.0 336.2L515.4 335.4L515.6 334.0Z" fill="#2272c9" stroke="#2272c9" stroke-width="1.6" stroke-linejoin="round"/>
<path d="M574.3 318V314.2Q574.3 312.2 576.3 312.2H592L604.1 324V328.3" fill="none" stroke="#6e6e6e" stroke-width="4" stroke-linejoin="round"/>
<path d="M591.3 312.5V324.7H604" fill="none" stroke="#6e6e6e" stroke-width="3.6"/>
<rect x="566.1" y="318.3" width="17.9" height="11.6" rx="2.5" fill="#6e6e6e"/>
<path d="M574.3 334.5V347.6Q574.3 349.6 576.3 349.6H585.5" fill="none" stroke="#6e6e6e" stroke-width="4"/>
<path d="M587.2 353.8L589.8 346.2L607.6 330.2Q609.6 328.6 611.4 330.6L613.2 332.6Q614.8 334.6 612.8 336.4L595.2 352Z" fill="#e0e0e0" stroke="#6e6e6e" stroke-width="2.6" stroke-linejoin="round"/>
<path d="M587.2 353.8L589.6 346.6L594.8 351.8Z" fill="#fafafa" stroke="#6e6e6e" stroke-width="2" stroke-linejoin="round"/><path d="M604.5 333L610 339" stroke="#6e6e6e" stroke-width="2"/>
<path d="M666.3 323.7V316.1H689.8V323.7M678 316.1V346M672 346H684" fill="none" stroke="#6e6e6e" stroke-width="4.4" stroke-linecap="round" stroke-linejoin="round"/>
<rect x="744.8" y="317.8" width="42.6" height="31" fill="none" stroke="#6e6e6e" stroke-width="4.4"/>
<circle cx="744.8" cy="317.8" r="3.3" fill="#6e6e6e"/><circle cx="744.8" cy="317.8" r="1.3" fill="#fafafa"/>
<circle cx="744.8" cy="348.8" r="3.3" fill="#6e6e6e"/><circle cx="744.8" cy="348.8" r="1.3" fill="#fafafa"/>
<circle cx="787.4" cy="317.8" r="3.3" fill="#6e6e6e"/><circle cx="787.4" cy="317.8" r="1.3" fill="#fafafa"/>
<circle cx="787.4" cy="348.8" r="3.3" fill="#6e6e6e"/><circle cx="787.4" cy="348.8" r="1.3" fill="#fafafa"/>
<text x="760" y="341.5" text-anchor="middle" font-family="Liberation Serif,serif" font-weight="bold" font-size="26.5" fill="#6e6e6e" stroke="#6e6e6e" stroke-width=".2">T</text>
<path d="M770.2 323.4H779.8M775 323.4V342.6M770.2 342.6H779.8" fill="none" stroke="#6e6e6e" stroke-width="2.2"/>
<rect x="836" y="314" width="36" height="35.9" rx="2" fill="#fafafa" stroke="#6e6e6e" stroke-width="4"/>
<path d="M845 333.6L849.6 338.6L863.2 327.3" fill="none" stroke="#6e6e6e" stroke-width="6" stroke-linecap="round" stroke-linejoin="round"/>
<circle cx="942" cy="331.9" r="18.1" fill="none" stroke="#6e6e6e" stroke-width="4"/><circle cx="942" cy="331.9" r="8" fill="#6e6e6e"/>
<rect x="1008" y="317.9" width="44.1" height="30.1" rx="2" fill="#fafafa" stroke="#6e6e6e" stroke-width="4"/><rect x="1035.3" y="319.9" width="14.8" height="26.1" fill="#e0e0e0"/>
<path d="M1035.3 318V348" stroke="#6e6e6e" stroke-width="3"/>
<path d="M1014.1 327.1H1030.1M1014.1 331.1H1030.1M1014.1 335.1H1030.1M1014.1 339.1H1030.1" stroke="#6e6e6e" stroke-width="1.8"/>
<path d="M1037.8 331.9L1043 326L1048.2 331.9ZM1037.8 336.1L1043 342L1048.2 336.1Z" fill="#6e6e6e"/>
<rect x="1096.1" y="332.7" width="21.9" height="21.1" rx="2" fill="#fafafa" stroke="#6e6e6e" stroke-width="4"/>
<rect x="1096.1" y="315.9" width="44.1" height="15.9" rx="2" fill="#e0e0e0" stroke="#6e6e6e" stroke-width="4"/>
<path d="M1119 316V332" stroke="#6e6e6e" stroke-width="3"/><path d="M1123.6 322.1H1134.7L1129.1 328.3Z" fill="#6e6e6e"/>
<path d="M1102.2 339.7H1111.9M1102.2 343.5H1111.9M1102.2 347.3H1111.9" stroke="#6e6e6e" stroke-width="1.8"/>
<rect x="1186.2" y="318.1" width="39.8" height="29.8" rx="5" fill="#e0e0e0" stroke="#6e6e6e" stroke-width="4.3"/>
<text x="1206" y="340.3" text-anchor="middle" font-family="Liberation Sans,sans-serif" font-weight="bold" font-size="17.2" fill="#6e6e6e" stroke="#6e6e6e" stroke-width=".5">OK</text>
<rect x="1274" y="317.9" width="38.2" height="30.1" rx="2" fill="#fafafa" stroke="#6e6e6e" stroke-width="4"/>
<path d="M1278.1 343.6L1287.1 330.3L1295.3 339L1301.8 333.6L1308 343.6Z" fill="#6e6e6e"/><circle cx="1303" cy="326.8" r="3.2" fill="#6e6e6e"/>
<rect x="1363.9" y="315.9" width="34" height="34.1" rx="2" fill="#fafafa" stroke="#6e6e6e" stroke-width="4"/><rect x="1363" y="315" width="35.8" height="8" fill="#6e6e6e"/>
<rect x="1369.3000000000002" y="310" width="5.2" height="9" rx="2.4" fill="#6e6e6e"/><rect x="1370.9" y="314" width="2" height="4.2" rx="1" fill="#fff"/>
<rect x="1387.2" y="310" width="5.2" height="9" rx="2.4" fill="#6e6e6e"/><rect x="1388.8" y="314" width="2" height="4.2" rx="1" fill="#fff"/>
<rect x="1370.3" y="330.3" width="5.5" height="5.3" rx="1.3" fill="#6e6e6e"/>
<rect x="1370.3" y="338.2" width="5.5" height="5.3" rx="1.3" fill="#6e6e6e"/>
<rect x="1378.1" y="330.3" width="5.5" height="5.3" rx="1.3" fill="#6e6e6e"/>
<rect x="1378.1" y="338.2" width="5.5" height="5.3" rx="1.3" fill="#6e6e6e"/>
<rect x="1386" y="330.3" width="5.5" height="5.3" rx="1.3" fill="#6e6e6e"/>
<rect x="1386" y="338.2" width="5.5" height="5.3" rx="1.3" fill="#6e6e6e"/>
<rect x="1386" y="346.3" width="18" height="7.5" rx="2.5" fill="#fafafa" stroke="#fafafa" stroke-width="7.5"/><rect x="1386" y="346.3" width="18" height="7.5" rx="2" fill="#fafafa" stroke="#6e6e6e" stroke-width="4"/>
<path d="M1465.3 322H1450.2Q1448.2 322 1448.2 324V343.8Q1448.2 345.8 1450.2 345.8H1486Q1488 345.8 1488 343.8V330" fill="none" stroke="#2272c9" stroke-width="4.3"/>
<path d="M1454.2 338.9H1465.3" stroke="#2272c9" stroke-width="2.2"/>
<path d="M1466.5 336.4L1470.4 322.6L1478.8 315.4L1488.8 325.6L1481.6 333.4Z" fill="#fafafa" stroke="#2272c9" stroke-width="3.2" stroke-linejoin="round"/>
<path d="M1478.8 315.4L1483.2 310.8L1493.4 320.8L1488.8 325.6Z" fill="#c9d9ee" stroke="#2272c9" stroke-width="1.6" stroke-linejoin="round"/><path d="M1477.6 316.6L1487.8 326.8" stroke="#2272c9" stroke-width="3"/>
<path d="M1466.8 336.2L1477.4 327.2" stroke="#2272c9" stroke-width="1.8"/><circle cx="1477.8" cy="326.8" r="2" fill="#2272c9"/>
<rect x="1538" y="318" width="40" height="29.9" rx="2" fill="#fafafa" stroke="#6e6e6e" stroke-width="4"/>
<rect x="1543.9" y="322.4" width="2.2" height="15.3" rx="0.5" fill="#6e6e6e"/><rect x="1543.9" y="339.9" width="2.2" height="3.8" rx="0.5" fill="#6e6e6e"/>
<rect x="1547.8" y="322.4" width="4.0" height="15.3" rx="1.8" fill="#6e6e6e"/><rect x="1547.8" y="339.9" width="4.0" height="3.8" rx="1.8" fill="#6e6e6e"/>
<rect x="1554" y="322.4" width="2.0" height="15.3" rx="0.5" fill="#6e6e6e"/><rect x="1554" y="339.9" width="2.0" height="3.8" rx="0.5" fill="#6e6e6e"/>
<rect x="1558.2" y="322.4" width="3.8" height="15.3" rx="1.8" fill="#6e6e6e"/><rect x="1558.2" y="339.9" width="3.8" height="3.8" rx="1.8" fill="#6e6e6e"/>
<rect x="1564.2" y="322.4" width="3.8" height="15.3" rx="1.8" fill="#6e6e6e"/><rect x="1564.2" y="339.9" width="3.8" height="3.8" rx="1.8" fill="#6e6e6e"/>
<rect x="1570" y="322.4" width="2.2" height="15.3" rx="0.5" fill="#6e6e6e"/><rect x="1570" y="339.9" width="2.2" height="3.8" rx="0.5" fill="#6e6e6e"/>
<rect x="1668.1" y="350" width="28" height="3.8" fill="#dedede"/>
<path d="M1669.2 348L1686 331.6" stroke="#6e6e6e" stroke-width="3.6" stroke-linecap="round"/>
<path d="M1677.5 326.4L1692 340" stroke="#6e6e6e" stroke-width="8" stroke-linecap="round"/>
<path d="M1686.8 331L1698.4 319.4" stroke="#6e6e6e" stroke-width="11.5"/>
<path d="M1694.2 313.4L1705 324.2" stroke="#6e6e6e" stroke-width="6" stroke-linecap="round"/></svg>
<!--/TB2-->
<!--ICONS-->

</div></div>
</body>
</html>
